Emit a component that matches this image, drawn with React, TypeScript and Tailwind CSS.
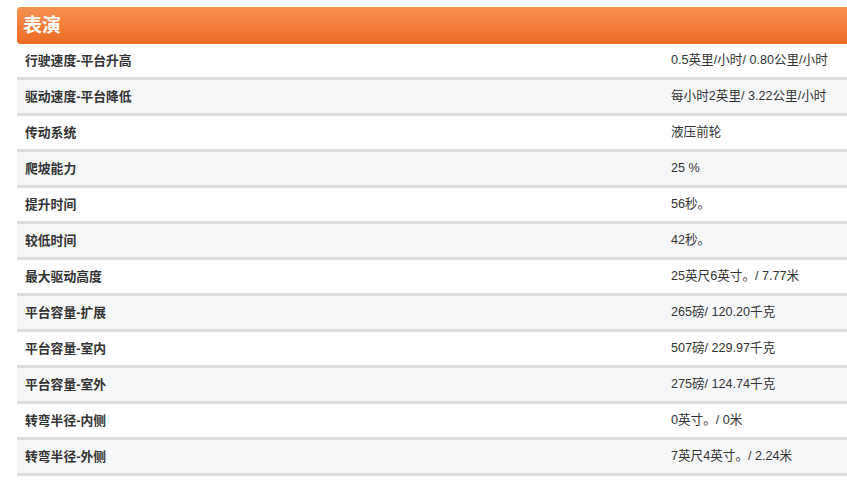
import React from "react";

const rows: [string, string][] = [
  ["行驶速度-平台升高", "0.5英里/小时/ 0.80公里/小时"],
  ["驱动速度-平台降低", "每小时2英里/ 3.22公里/小时"],
  ["传动系统", "液压前轮"],
  ["爬坡能力", "25 %"],
  ["提升时间", "56秒。"],
  ["较低时间", "42秒。"],
  ["最大驱动高度", "25英尺6英寸。/ 7.77米"],
  ["平台容量-扩展", "265磅/ 120.20千克"],
  ["平台容量-室内", "507磅/ 229.97千克"],
  ["平台容量-室外", "275磅/ 124.74千克"],
  ["转弯半径-内侧", "0英寸。/ 0米"],
  ["转弯半径-外侧", "7英尺4英寸。/ 2.24米"],
];

export default function App() {
  return (
    <div
      className="w-[847px] h-[488px] overflow-hidden bg-white pt-[7px] pl-[17px]"
      style={{ fontFamily: '"Liberation Sans", "Noto Sans CJK SC", sans-serif' }}
    >
      <div className="w-[840px]">
        <div className="h-[37px] rounded-l-[4px] bg-gradient-to-b from-[#f6914f] to-[#ec6a1d] flex items-center pl-[6px]">
          <h2 className="text-white font-bold text-[19px] leading-none">表演</h2>
        </div>
        {rows.map(([label, value], i) => (
          <div
            key={label}
            className={
              i % 2 === 0
                ? "grid grid-cols-[654px_1fr] h-[36px] items-center border-b-[3px] border-[#dcdcdc] bg-white text-[#333]"
                : "grid grid-cols-[654px_1fr] h-[36px] items-center border-b-[3px] border-[#dcdcdc] bg-[#f6f7f9] text-[#333]"
            }
          >
            <div className="pl-[8px] font-semibold text-[12.8px]">{label}</div>
            <div className="text-[12.6px]">{value}</div>
          </div>
        ))}
      </div>
    </div>
  );
}
